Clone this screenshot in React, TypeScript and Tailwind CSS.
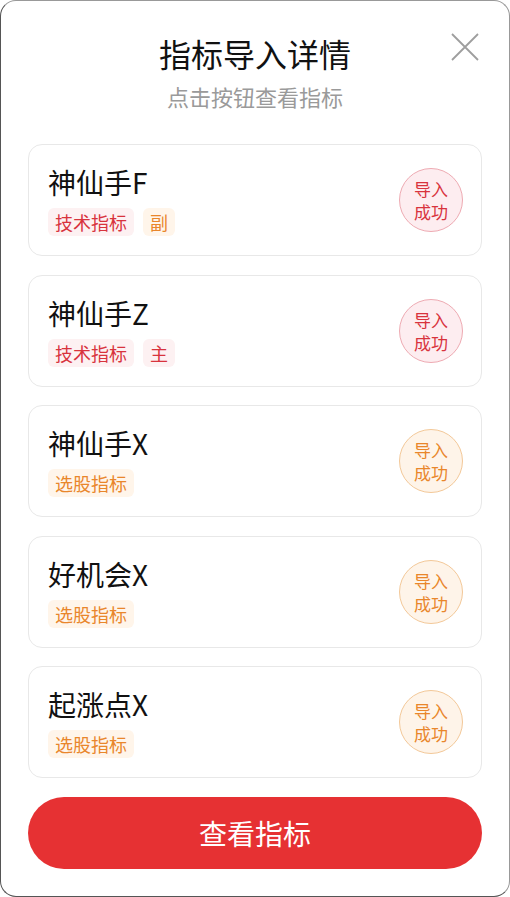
import React from 'react';

type Tag = { text: string; tone: 'red' | 'orange' };
type Item = { name: string; tags: Tag[]; tone: 'red' | 'orange' };

const items: Item[] = [
  { name: '神仙手F', tags: [{ text: '技术指标', tone: 'red' }, { text: '副', tone: 'orange' }], tone: 'red' },
  { name: '神仙手Z', tags: [{ text: '技术指标', tone: 'red' }, { text: '主', tone: 'red' }], tone: 'red' },
  { name: '神仙手X', tags: [{ text: '选股指标', tone: 'orange' }], tone: 'orange' },
  { name: '好机会X', tags: [{ text: '选股指标', tone: 'orange' }], tone: 'orange' },
  { name: '起涨点X', tags: [{ text: '选股指标', tone: 'orange' }], tone: 'orange' },
];

function Badge({ tone }: { tone: 'red' | 'orange' }) {
  const cls =
    tone === 'red'
      ? 'bg-[#fdedf0] border-[#eeaab2] text-[#d8333d]'
      : 'bg-[#fef4e9] border-[#f3c898] text-[#e9862b]';
  return (
    <div
      className={`w-[64px] h-[64px] rounded-full border flex flex-col items-center justify-center text-[17px] leading-[23px] ${cls}`}
    >
      <span>导入</span>
      <span>成功</span>
    </div>
  );
}

function Card({ item }: { item: Item }) {
  return (
    <div className="h-[112px] rounded-[14px] border border-[#e8e8e8] bg-white flex items-center justify-between pl-[19px] pr-[18px]">
      <div className="flex flex-col">
        <div className="text-[28px] leading-[36px] text-[#111]">{item.name}</div>
        <div className="flex gap-[9px] mt-[8px]">
          {item.tags.map((t) => (
            <span
              key={t.text}
              className={`h-[28px] px-[7px] rounded-[6px] text-[18px] leading-[28px] ${
                t.tone === 'red' ? 'bg-[#fdf1f2] text-[#d8333d]' : 'bg-[#fff5ea] text-[#e9862b]'
              }`}
            >
              {t.text}
            </span>
          ))}
        </div>
      </div>
      <Badge tone={item.tone} />
    </div>
  );
}

export default function App() {
  return (
    <div
      className="w-[510px] h-[897px] bg-white rounded-[16px] border-[1.5px] border-[#555] border-t-[#999] border-r-[#999] relative flex flex-col px-[27px]"
      style={{ fontFamily: '"Noto Sans CJK SC", "Noto Sans", sans-serif' }}
    >
      <button className="absolute right-[30px] top-[32px] w-[28px] h-[28px]">
        <svg viewBox="0 0 28 28" width="28" height="28" fill="none" stroke="#9e9e9e" strokeWidth="1.8">
          <path d="M1 1L27 27M27 1L1 27" />
        </svg>
      </button>
      <div className="pt-[32px] text-center text-[32px] leading-[40px] text-[#111]">指标导入详情</div>
      <div className="mt-[8px] text-center text-[22px] leading-[30px] text-[#9a9a9a]">点击按钮查看指标</div>
      <div className="mt-[33px] flex flex-col gap-[18.5px]">
        {items.map((it) => (
          <Card key={it.name} item={it} />
        ))}
      </div>
      <button className="mt-[19px] h-[72px] rounded-full bg-[#e63133] text-white text-[28px]">查看指标</button>
    </div>
  );
}
